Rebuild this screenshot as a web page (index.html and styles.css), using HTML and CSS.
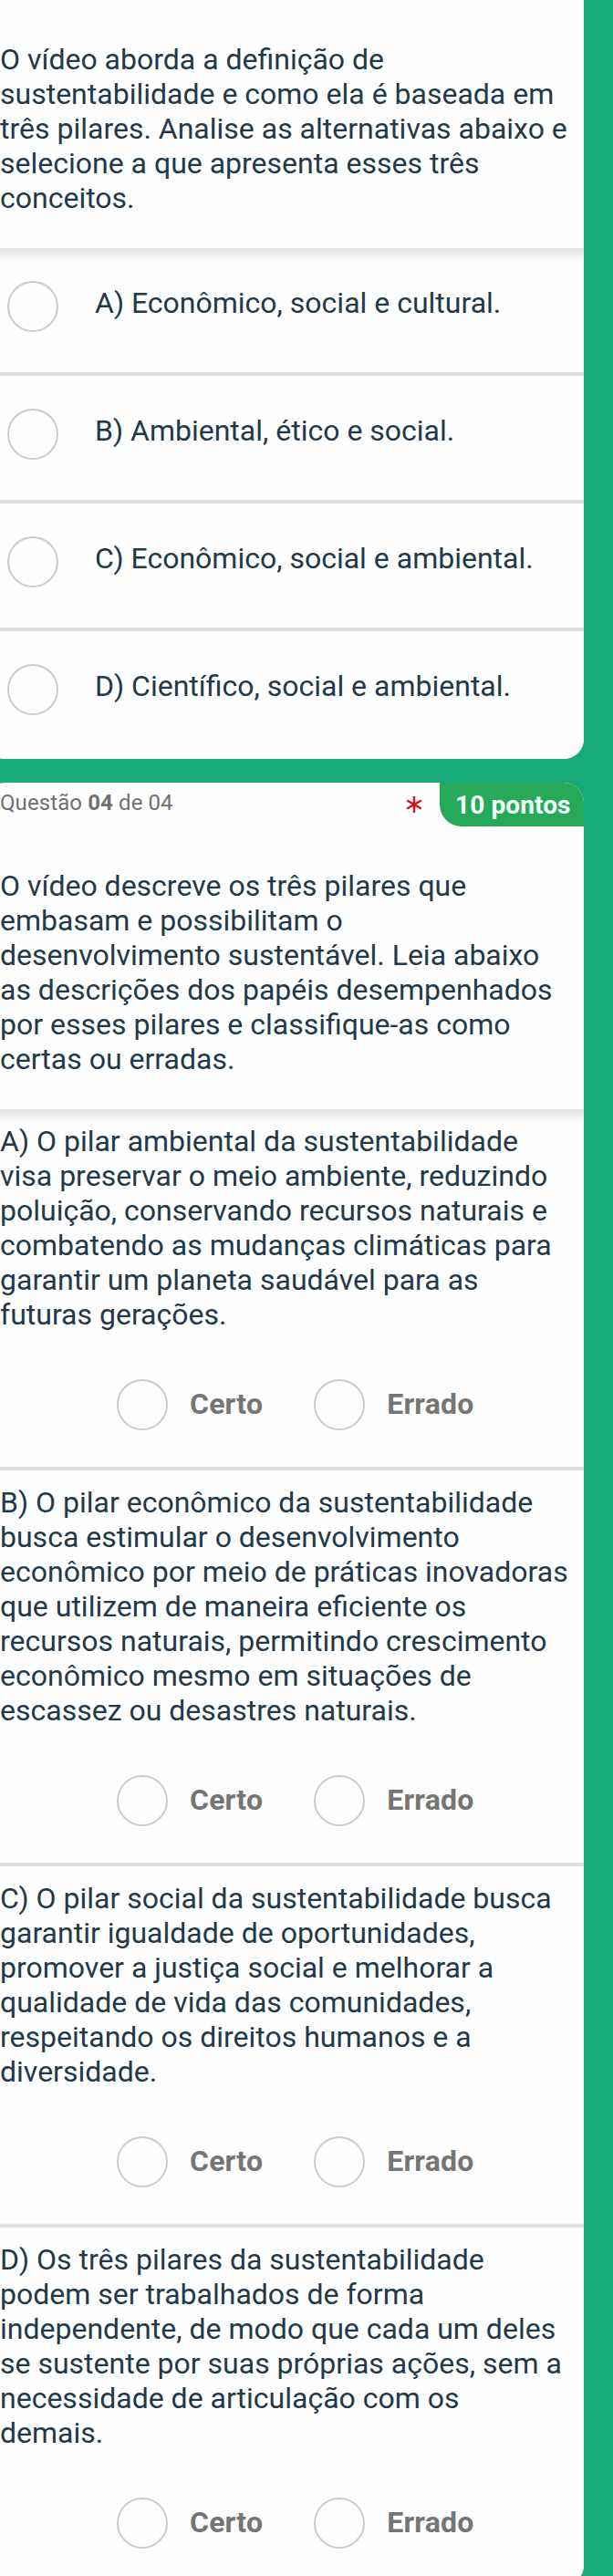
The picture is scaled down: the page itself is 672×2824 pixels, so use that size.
FILE: index.html
```html
<!DOCTYPE html>
<html lang="pt-BR">
<head>
  <meta charset="UTF-8">
  <title>Questionário</title>
  <link rel="stylesheet" href="styles.css">
</head>
<body>
  <div class="card first">
    <p class="question">O vídeo aborda a definição de<br>
      sustentabilidade e como ela é baseada em<br>
      três pilares. Analise as alternativas abaixo e<br>
      selecione a que apresenta esses três<br>
      conceitos.</p>
    <div class="answers">
      <label class="option"><span class="radio"></span><span class="text">A) Econômico, social e cultural.</span></label>
      <label class="option"><span class="radio"></span><span class="text">B) Ambiental, ético e social.</span></label>
      <label class="option"><span class="radio"></span><span class="text">C) Econômico, social e ambiental.</span></label>
      <label class="option"><span class="radio"></span><span class="text">D) Científico, social e ambiental.</span></label>
    </div>
  </div>

  <div class="card">
    <div class="header">
      <span class="number">Questão <b>04</b> de 04</span>
      <svg class="required" width="18" height="20" viewBox="0 0 18 20">
        <path d="M9 1v18M1.2 5.5l15.6 9M16.8 5.5l-15.6 9"/>
      </svg>
      <span class="points">10 pontos</span>
    </div>
    <p class="question">O vídeo descreve os três pilares que<br>
      embasam e possibilitam o<br>
      desenvolvimento sustentável. Leia abaixo<br>
      as descrições dos papéis desempenhados<br>
      por esses pilares e classifique-as como<br>
      certas ou erradas.</p>
    <div class="answers">
      <div class="item">
        <p>A) O pilar ambiental da sustentabilidade<br>
          visa preservar o meio ambiente, reduzindo<br>
          poluição, conservando recursos naturais e<br>
          combatendo as mudanças climáticas para<br>
          garantir um planeta saudável para as<br>
          futuras gerações.</p>
        <div class="choices">
          <label class="choice"><span class="radio"></span>Certo</label>
          <label class="choice"><span class="radio"></span>Errado</label>
        </div>
      </div>
      <div class="item">
        <p>B) O pilar econômico da sustentabilidade<br>
          busca estimular o desenvolvimento<br>
          econômico por meio de práticas inovadoras<br>
          que utilizem de maneira eficiente os<br>
          recursos naturais, permitindo crescimento<br>
          econômico mesmo em situações de<br>
          escassez ou desastres naturais.</p>
        <div class="choices">
          <label class="choice"><span class="radio"></span>Certo</label>
          <label class="choice"><span class="radio"></span>Errado</label>
        </div>
      </div>
      <div class="item">
        <p>C) O pilar social da sustentabilidade busca<br>
          garantir igualdade de oportunidades,<br>
          promover a justiça social e melhorar a<br>
          qualidade de vida das comunidades,<br>
          respeitando os direitos humanos e a<br>
          diversidade.</p>
        <div class="choices">
          <label class="choice"><span class="radio"></span>Certo</label>
          <label class="choice"><span class="radio"></span>Errado</label>
        </div>
      </div>
      <div class="item">
        <p>D) Os três pilares da sustentabilidade<br>
          podem ser trabalhados de forma<br>
          independente, de modo que cada um deles<br>
          se sustente por suas próprias ações, sem a<br>
          necessidade de articulação com os<br>
          demais.</p>
        <div class="choices">
          <label class="choice"><span class="radio"></span>Certo</label>
          <label class="choice"><span class="radio"></span>Errado</label>
        </div>
      </div>
    </div>
  </div>
</body>
</html>
```
FILE: styles.css
```css
html{
  height: 2824px;
  overflow: hidden;
}
body{
  margin: 0;
  height: 2824px;
  overflow: hidden;
  background-color: #19aa7a;
  font-family: Roboto, sans-serif;
  font-size: 32px;
  line-height: 38px;
  color: #21394b;
  white-space: nowrap;
}
p{
  margin: 0;
}
.card{
  box-sizing: border-box;
  width: 656px;
  margin: 0 0 26px -16px;
  background-color: #fefefe;
  border-radius: 22px;
  overflow: hidden;
}
.first{
  border-radius: 0 0 22px 22px;
  padding-top: 10px;
}
.question{
  padding: 36px 16px;
}
.answers{
  background: linear-gradient(#e2e2e2, #f0f0f0 8px, #fefefe 16px) no-repeat;
}

/* single choice */
.option{
  display: flex;
  gap: 40px;
  height: 100px;
  padding: 36px 0 0 24px;
  border-bottom: 4px solid #dedede;
}
.option:last-child{
  height: 104px;
  border-bottom: none;
}
.option .text{
  padding-top: 5px;
}
.radio{
  box-sizing: border-box;
  width: 56px;
  height: 56px;
  border: 2px solid #cbcbcb;
  border-radius: 50%;
}

/* question header */
.header{
  display: flex;
  height: 58px;
  padding-left: 16px;
}
.number{
  flex: 1;
  padding-top: 3px;
  font-size: 24px;
  letter-spacing: 0.1px;
  color: #707070;
}
.required{
  margin: 14px 19px 0 0;
  fill: none;
  stroke: #d21118;
  stroke-width: 2.4;
}
.points{
  box-sizing: border-box;
  width: 158px;
  height: 48px;
  padding: 6px 0 0 17px;
  border-bottom-left-radius: 24px;
  background-color: #27a95c;
  font-size: 28px;
  font-weight: 700;
  letter-spacing: 0.1px;
  color: #f4fff8;
}

/* true or false */
.item{
  padding: 16px 16px 40px;
  border-bottom: 4px solid #dedede;
}
.item:last-child{
  border-bottom: none;
}
.choices{
  display: flex;
  gap: 56px;
  padding: 52px 0 0 128px;
}
.choice{
  display: flex;
  gap: 24px;
  line-height: 54px;
  font-weight: 700;
  letter-spacing: 0.2px;
  color: #757575;
}
```
